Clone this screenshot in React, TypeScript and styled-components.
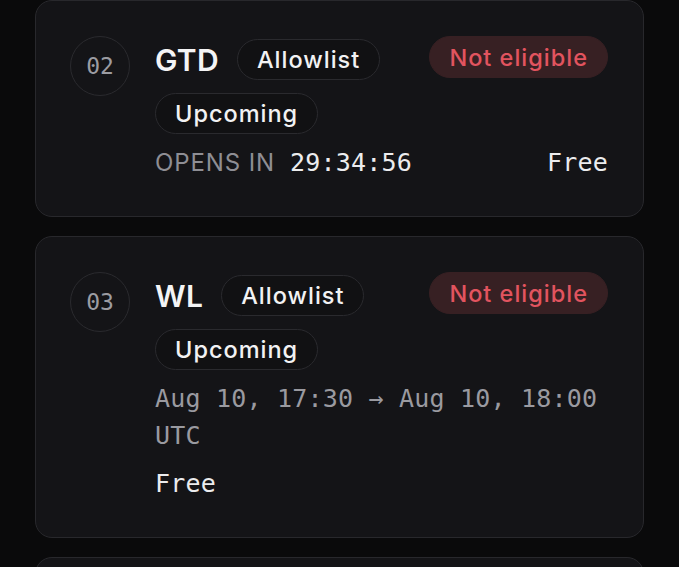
import * as React from 'react'
import styled, { createGlobalStyle } from 'styled-components'

const GlobalStyle = createGlobalStyle`
  html, body {
    margin: 0;
    padding: 0;
    background: #0a0a0b;
  }
  body {
    font-family: Inter, "Noto Sans", sans-serif;
    color: #f2f2f3;
    overflow: hidden;
  }
`

const List = styled.div`
  display: flex;
  flex-direction: column;
  gap: 19px;
  padding: 0 35px;
`

const Card = styled.div`
  display: flex;
  align-items: flex-start;
  gap: 25px;
  padding: 35px 35px 35px 34px;
  background: #141417;
  border: 1px solid #28282c;
  border-radius: 17px;
`

const Step = styled.div`
  flex: none;
  box-sizing: border-box;
  width: 60px;
  height: 60px;
  border-radius: 50%;
  border: 1px solid #2a2a2e;
  display: flex;
  align-items: center;
  justify-content: center;
  font-family: "DejaVu Sans Mono", monospace;
  font-size: 23px;
  color: #9c9ca2;
`

const Body = styled.div`
  flex: 1;
  min-width: 0;
  display: flex;
  flex-direction: column;
  gap: 10px;
`

const Header = styled.div`
  display: flex;
  align-items: flex-start;
  justify-content: space-between;
  gap: 12px;
`

const Tags = styled.div`
  display: flex;
  flex-wrap: wrap;
  align-items: center;
  column-gap: 18px;
  row-gap: 13px;
  margin-top: 3px;
`

const Title = styled.h2`
  margin: 0;
  font-size: 30px;
  font-weight: 600;
  letter-spacing: 0.3px;
  color: #f4f4f5;
`

const Pill = styled.span<{ $tone?: 'neutral' | 'danger' }>`
  flex: none;
  display: inline-flex;
  align-items: center;
  box-sizing: border-box;
  height: ${p => (p.$tone === 'danger' ? '42px' : '41px')};
  padding: 0 19px;
  border-radius: 999px;
  font-size: 23.5px;
  font-weight: 500;
  letter-spacing: 1px;
  white-space: nowrap;
  background: ${p => (p.$tone === 'danger' ? '#372023' : '#111113')};
  border: 1px solid ${p => (p.$tone === 'danger' ? '#372023' : '#2a2a2e')};
  color: ${p => (p.$tone === 'danger' ? '#e2545f' : '#f2f2f3')};
`

const Meta = styled.div`
  display: flex;
  flex-wrap: wrap;
  justify-content: space-between;
  align-items: baseline;
  row-gap: 11px;
  line-height: 37px;
`

const Opens = styled.span`
  display: inline-flex;
  align-items: baseline;
  gap: 15px;
`

const Label = styled.span`
  font-size: 24px;
  font-weight: 400;
  letter-spacing: 0.9px;
  color: #8e8e94;
`

const Mono = styled.span<{ $muted?: boolean }>`
  font-family: "DejaVu Sans Mono", monospace;
  font-size: 25px;
  letter-spacing: 0.2px;
  color: ${p => (p.$muted ? '#9a9aa0' : '#ececee')};
`

type Phase = {
  step: string
  name: string
  opensIn?: string
  window?: string
  price: string
}

const phases: Phase[] = [
  { step: '02', name: 'GTD', opensIn: '29:34:56', price: 'Free' },
  { step: '03', name: 'WL', window: 'Aug 10, 17:30 → Aug 10, 18:00 UTC', price: 'Free' },
  { step: '04', name: 'Public', window: 'Aug 10, 18:00 → Aug 11, 18:00 UTC', price: 'Free' },
]

export default function App() {
  return (
    <>
      <GlobalStyle />
      <List>
        {phases.map(phase => (
          <Card key={phase.step}>
            <Step>{phase.step}</Step>
            <Body>
              <Header>
                <Tags>
                  <Title>{phase.name}</Title>
                  <Pill>Allowlist</Pill>
                  <Pill>Upcoming</Pill>
                </Tags>
                <Pill $tone="danger">Not eligible</Pill>
              </Header>
              <Meta>
                {phase.opensIn ? (
                  <Opens>
                    <Label>OPENS IN</Label>
                    <Mono>{phase.opensIn}</Mono>
                  </Opens>
                ) : (
                  <Mono $muted>{phase.window}</Mono>
                )}
                <Mono>{phase.price}</Mono>
              </Meta>
            </Body>
          </Card>
        ))}
      </List>
    </>
  )
}
